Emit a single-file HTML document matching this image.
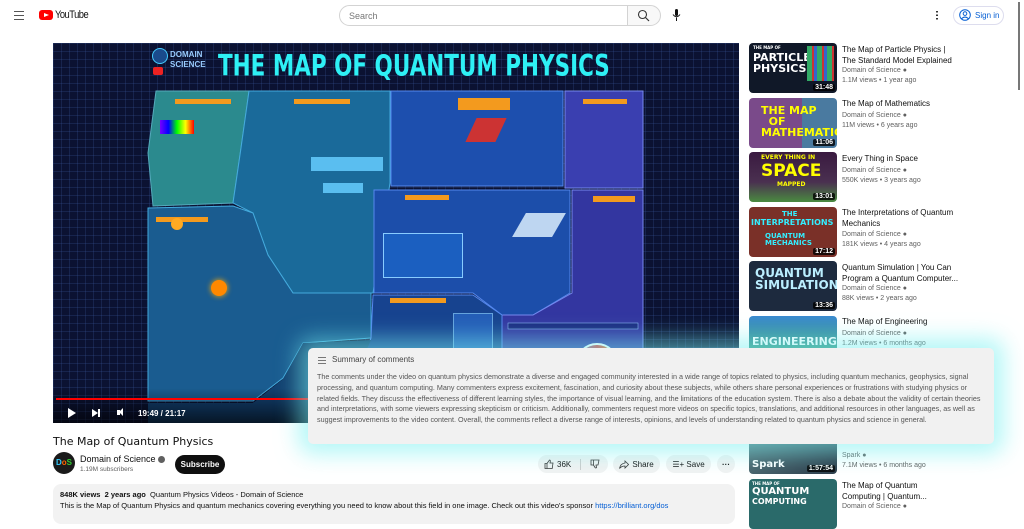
<!DOCTYPE html>
<html><head><meta charset="utf-8"><style>
*{margin:0;padding:0;box-sizing:border-box}
body{width:1024px;height:512px;overflow:hidden;background:#fff;font-family:"Liberation Sans",sans-serif;color:#0f0f0f;position:relative}
.a{position:absolute}
.side .th{position:absolute;left:749px;width:88px;height:50px;border-radius:4px;overflow:hidden}
.side .t{position:absolute;left:842px;font-size:8px;line-height:11px;color:#0f0f0f;width:130px}
.side .m{position:absolute;left:842px;font-size:7px;color:#606060;line-height:10px;white-space:nowrap}
.dur{position:absolute;right:2px;bottom:2px;background:rgba(0,0,0,.8);color:#fff;font-size:7px;font-weight:bold;padding:0 2px;border-radius:2px}
.tt{position:absolute;left:4px;font-weight:bold;font-family:"DejaVu Sans",sans-serif;line-height:1}
.btn{position:absolute;top:455px;height:18px;background:#f2f2f2;border-radius:9px;font-size:8px;display:flex;align-items:center;justify-content:center;gap:3px}
.lbl{position:absolute;background:#f39a1e;height:5px}
</style></head><body>
<!-- header -->
<div class="a" style="left:14px;top:11px;width:10px;height:9px;border-top:1.5px solid #555;border-bottom:1.5px solid #555"><div style="margin-top:2.5px;height:1.5px;background:#555"></div></div>
<div class="a" style="left:39px;top:10px;width:14px;height:10px;background:#f00;border-radius:3px"></div>
<div class="a" style="left:44px;top:12.5px;width:0;height:0;border-left:5px solid #fff;border-top:2.5px solid transparent;border-bottom:2.5px solid transparent"></div>
<div class="a" style="left:55px;top:9px;font-size:11px;letter-spacing:-0.6px;transform:scaleX(.85);transform-origin:left">YouTube</div>
<div class="a" style="left:339px;top:5px;width:289px;height:21px;border:1px solid #d3d3d3;border-radius:11px 0 0 11px;font-size:9px;color:#777;padding:5px 0 0 9px">Search</div>
<div class="a" style="left:627px;top:5px;width:34px;height:21px;border:1px solid #d3d3d3;background:#f8f8f8;border-radius:0 11px 11px 0"></div>
<svg class="a" style="left:637px;top:9px" width="13" height="13" viewBox="0 0 13 13"><circle cx="5.5" cy="5.5" r="4" fill="none" stroke="#333" stroke-width="1.1"/><path d="M8.5 8.5 L12 12" stroke="#333" stroke-width="1.2"/></svg>
<svg class="a" style="left:672px;top:9px" width="9" height="13" viewBox="0 0 9 13"><rect x="3" y="0" width="3" height="7" rx="1.5" fill="#111"/><path d="M1 5.5 Q4.5 10 8 5.5 M4.5 8.5 V12" stroke="#111" fill="none" stroke-width="1"/></svg>
<div class="a" style="left:936px;top:10px;width:2px;height:10px;background:radial-gradient(circle,#333 0.9px,transparent 1px) 0 0/2px 3.5px"></div>
<div class="a" style="left:953px;top:6px;width:51px;height:19px;border:1px solid #dde;border-radius:10px;font-size:8px;color:#065fd4;padding:4px 0 0 21px">Sign in</div>
<svg class="a" style="left:959px;top:9px" width="12" height="12" viewBox="0 0 12 12"><circle cx="6" cy="6" r="5.3" fill="none" stroke="#065fd4"/><circle cx="6" cy="4.6" r="1.8" fill="none" stroke="#065fd4"/><path d="M2.6 9.6 Q6 6.5 9.4 9.6" fill="none" stroke="#065fd4"/></svg>
<div class="a" style="left:1018px;top:2px;width:2px;height:88px;background:#777"></div>

<!-- video -->
<div class="a" style="left:53px;top:43px;width:686px;height:380px;background:#0b1232;overflow:hidden;background-image:linear-gradient(rgba(60,90,160,.25) 1px,transparent 1px),linear-gradient(90deg,rgba(60,90,160,.25) 1px,transparent 1px);background-size:8px 8px">
 <svg class="a" style="left:0;top:0" width="686" height="380" viewBox="0 0 686 380">
  <polygon points="103,48 196,48 188,105 180,160 100,163 95,110" fill="#2b8a8e" stroke="#5ab" stroke-width="1"/>
  <polygon points="196,48 337,48 337,140 320,250 240,250 215,212 200,170 180,160 188,105" fill="#1a6a9a" stroke="#4ad" stroke-width="1"/>
  <polygon points="338,48 510,48 510,143 338,143" fill="#1d4fae" stroke="#58e" stroke-width="1"/>
  <polygon points="512,48 590,48 590,145 512,145" fill="#3a3fb0" stroke="#78e" stroke-width="1"/>
  <polygon points="95,165 180,163 200,170 215,212 240,250 318,250 318,295 250,300 230,335 200,358 95,358" fill="#1a5c90" stroke="#4ad" stroke-width="1"/>
  <polygon points="321,147 517,147 517,250 480,272 449,272 420,250 321,250" fill="#1c4eaa" stroke="#58e" stroke-width="1"/>
  <polygon points="519,147 590,147 590,396 449,396 449,272 480,272 519,250" fill="#3336a0" stroke="#78e" stroke-width="1"/>
  <polygon points="320,252 420,252 449,272 449,374 320,374 300,340 318,295" fill="#17438f" stroke="#58e" stroke-width="1"/>
  <polygon points="95,360 200,360 230,336 250,300 318,297 300,340 320,376 449,376 449,396 95,396" fill="#124070"/>
  <rect x="540" y="153" width="42" height="6" fill="#f39a1e"/>
  <rect x="455" y="280" width="130" height="6" fill="#1a2a80" stroke="#9cf" stroke-width=".5"/>
 </svg>
 <div class="a" style="left:99px;top:5px;width:16px;height:16px;border-radius:50%;background:#1a4b8c;border:1px solid #4cf"></div>
 <div class="a" style="left:100px;top:24px;width:10px;height:8px;background:#e22;border-radius:2px"></div>
 <div class="a" style="left:117px;top:7px;color:#9cf;font-size:8px;font-weight:bold;line-height:10px">DOMAIN<br>SCIENCE</div>
 <div class="a" style="left:165px;top:7px;color:#2ef0f5;font-size:21.5px;font-weight:bold;font-family:'DejaVu Sans',sans-serif;white-space:nowrap;transform:scaleY(1.35);transform-origin:top">THE MAP OF QUANTUM PHYSICS</div>
 <div class="lbl" style="left:122px;top:56px;width:56px"></div>
 <div class="lbl" style="left:241px;top:56px;width:56px"></div>
 <div class="lbl" style="left:405px;top:55px;width:52px;height:12px"></div>
 <div class="lbl" style="left:530px;top:56px;width:44px"></div>
 <div class="lbl" style="left:103px;top:174px;width:52px"></div>
 <div class="lbl" style="left:352px;top:152px;width:44px"></div>
 <div class="lbl" style="left:337px;top:255px;width:56px"></div>
 <div class="lbl" style="left:163px;top:380px;width:56px"></div>
 <div class="a" style="left:107px;top:77px;width:34px;height:14px;background:linear-gradient(90deg,#70f,#00f,#0f0,#ff0,#f00)"></div>
 <div class="a" style="left:258px;top:114px;width:72px;height:14px;background:#6cf;opacity:.85"></div>
 <div class="a" style="left:270px;top:140px;width:40px;height:10px;background:#6cf;opacity:.85"></div>
 <div class="a" style="left:418px;top:75px;width:30px;height:24px;background:#c33;transform:skew(-25deg)"></div>
 <div class="a" style="left:466px;top:170px;width:40px;height:24px;background:#d0e6f8;opacity:.9;transform:skew(-30deg)"></div>
 <div class="a" style="left:330px;top:190px;width:80px;height:45px;border:1px solid #8cf;background:#1b5fc0"></div>
 <div class="a" style="left:400px;top:270px;width:40px;height:40px;border:1px solid #8cf;background:#2a68c8;opacity:.7"></div>
 <div class="a" style="left:522px;top:300px;width:44px;height:44px;border-radius:50%;background:conic-gradient(#d33,#fb0,#3c3,#39f,#d33);border:2px solid #fff"></div>
 <div class="a" style="left:158px;top:237px;width:16px;height:16px;border-radius:50%;background:#f80;box-shadow:0 0 6px #fa0"></div>
 <div class="a" style="left:418px;top:305px;width:20px;height:20px;border-radius:50%;background:#f90"></div>
 <div class="a" style="left:118px;top:175px;width:12px;height:12px;border-radius:50%;background:#fa2"></div>
 <div class="a" style="left:0;top:345px;width:686px;height:35px;background:linear-gradient(transparent,rgba(0,0,0,.65))"></div>
 <div class="a" style="left:3px;top:355px;width:254px;height:2px;background:#f00"></div>
 <div class="a" style="left:15px;top:365px;width:0;height:0;border-left:8px solid #fff;border-top:5px solid transparent;border-bottom:5px solid transparent"></div>
 <div class="a" style="left:39px;top:366px;width:0;height:0;border-left:6px solid #fff;border-top:4px solid transparent;border-bottom:4px solid transparent"></div>
 <div class="a" style="left:45px;top:366px;width:2px;height:8px;background:#fff"></div>
 <div class="a" style="left:64px;top:367px;width:3px;height:5px;background:#fff"></div>
 <div class="a" style="left:66px;top:365px;width:0;height:0;border-right:4px solid #fff;border-top:4px solid transparent;border-bottom:4px solid transparent"></div>
 <div class="a" style="left:85px;top:366px;color:#fff;font-size:8px;font-weight:bold">19:49 / 21:17</div>
</div>

<!-- info -->
<div class="a" style="left:53px;top:435px;font-size:11px;font-family:'DejaVu Sans',sans-serif">The Map of Quantum Physics</div>
<div class="a" style="left:53px;top:452px;width:22px;height:22px;border-radius:50%;background:#1a1a1a"><div style="color:#3cf;font-size:8px;font-weight:bold;padding:6px 0 0 3px">D<span style="color:#f60">o</span><span style="color:#3c3">S</span></div></div>
<div class="a" style="left:80px;top:454px;font-size:9px">Domain of Science <span style="display:inline-block;width:7px;height:7px;border-radius:50%;background:#606060;vertical-align:-1px"></span></div>
<div class="a" style="left:80px;top:466px;font-size:6.5px;color:#606060">1.19M subscribers</div>
<div class="a" style="left:175px;top:455px;width:50px;height:19px;border-radius:10px;background:#0f0f0f;color:#fff;font-size:8px;font-weight:bold;text-align:center;line-height:19px">Subscribe</div>
<div class="btn" style="left:538px;width:70px;justify-content:flex-start;padding-left:6px"><svg width="10" height="10" viewBox="0 0 10 10"><path d="M1 4.5h2v5H1z M3 4.5 L5.5 1 Q6.5 1 6.3 2.5 L6 4 H9 L8.2 9.5 H3" fill="none" stroke="#333" stroke-width=".8"/></svg>36K<span style="width:1px;height:11px;background:#ccc;margin:0 6px"></span><svg width="10" height="10" viewBox="0 0 10 10"><path d="M1 1h8 L8 6 H6 L6.5 8.5 Q5.8 9.5 5 8.5 L3.5 6 H1z M3.5 1v5" fill="none" stroke="#333" stroke-width=".8"/></svg></div>
<div class="btn" style="left:613px;width:47px"><svg width="10" height="9" viewBox="0 0 10 9"><path d="M6 1 L9.5 4.5 L6 8 V6 Q2.5 6 .5 8.5 Q1.5 3.5 6 3z" fill="none" stroke="#333" stroke-width=".8"/></svg>Share</div>
<div class="btn" style="left:666px;width:45px">☰+ Save</div>
<div class="btn" style="left:717px;width:18px;font-weight:bold">···</div>
<div class="a" style="left:53px;top:484px;width:682px;height:40px;background:#f2f2f2;border-radius:8px;padding:5px 7px;font-size:7.5px;line-height:11px"><b>848K views&nbsp; 2 years ago</b>&nbsp; Quantum Physics Videos - Domain of Science<br>This is the Map of Quantum Physics and quantum mechanics covering everything you need to know about this field in one image. Check out this video's sponsor <span style="color:#065fd4">https://brilliant.org/dos</span></div>

<!-- sidebar -->
<div class="side">
 <div class="th" style="top:43px;background:#101828"><div class="tt" style="top:3px;color:#fff;font-size:4px">THE MAP OF</div><div class="tt" style="top:9px;color:#fff;font-size:11px">PARTICLE<br>PHYSICS</div><div class="a" style="left:58px;top:3px;width:27px;height:35px;background:repeating-linear-gradient(90deg,#3a6 0 5px,#c33 5px 7px,#36c 7px 10px)"></div><div class="dur">31:48</div></div>
 <div class="t" style="top:44px">The Map of Particle Physics |<br>The Standard Model Explained</div><div class="m" style="top:66px">Domain of Science ●</div><div class="m" style="top:76px">1.1M views • 1 year ago</div>

 <div class="th" style="top:98px;background:linear-gradient(90deg,#7a4a8a 60%,#4a7aa0 60%)"><div class="tt" style="top:7px;left:12px;color:#ff0;font-size:11px;line-height:11px">THE MAP<br>&nbsp;&nbsp;OF<br>MATHEMATICS</div><div class="dur">11:06</div></div>
 <div class="t" style="top:98px">The Map of Mathematics</div><div class="m" style="top:111px">Domain of Science ●</div><div class="m" style="top:121px">11M views • 6 years ago</div>

 <div class="th" style="top:152px;background:linear-gradient(#3a1a40,#4a3050 60%,#4a8a40)"><div class="tt" style="top:3px;left:12px;color:#ff0;font-size:6px">EVERY THING IN</div><div class="tt" style="top:11px;left:12px;color:#ff0;font-size:17px">SPACE</div><div class="tt" style="top:30px;left:28px;color:#ff0;font-size:6px">MAPPED</div><div class="dur">13:01</div></div>
 <div class="t" style="top:153px">Every Thing in Space</div><div class="m" style="top:166px">Domain of Science ●</div><div class="m" style="top:176px">550K views • 3 years ago</div>

 <div class="th" style="top:207px;background:#7a3028"><div class="tt" style="top:4px;left:33px;color:#3ef;font-size:7px">THE</div><div class="tt" style="top:12px;left:2px;color:#3ef;font-size:8px">INTERPRETATIONS</div><div class="tt" style="top:26px;left:16px;color:#3ef;font-size:7px">QUANTUM<br>MECHANICS</div><div class="dur">17:12</div></div>
 <div class="t" style="top:207px">The Interpretations of Quantum<br>Mechanics</div><div class="m" style="top:230px">Domain of Science ●</div><div class="m" style="top:240px">181K views • 4 years ago</div>

 <div class="th" style="top:261px;background:#1d2a3e"><div class="tt" style="top:6px;left:6px;color:#bef;font-size:12px">QUANTUM<br>SIMULATION</div><div class="dur">13:36</div></div>
 <div class="t" style="top:262px;white-space:nowrap">Quantum Simulation | You Can<br>Program a Quantum Computer...</div><div class="m" style="top:284px">Domain of Science ●</div><div class="m" style="top:294px">88K views • 2 years ago</div>

 <div class="th" style="top:316px;background:linear-gradient(#3a8ad0,#3a9a50)"><div class="tt" style="top:20px;left:3px;color:#fff;font-size:11px">ENGINEERING</div></div>
 <div class="t" style="top:316px">The Map of Engineering</div><div class="m" style="top:329px">Domain of Science ●</div><div class="m" style="top:339px">1.2M views • 6 months ago</div>

 <div class="th" style="top:424px;background:linear-gradient(135deg,#5a7a80,#2a3a48)"><div class="tt" style="top:36px;left:3px;color:#fff;font-size:10px">Spark</div><div class="dur">1:57:54</div></div>
 <div class="m" style="top:451px">Spark ●</div><div class="m" style="top:461px">7.1M views • 6 months ago</div>

 <div class="th" style="top:479px;background:#2a6a6a"><div class="tt" style="top:3px;left:3px;color:#fff;font-size:4px">THE MAP OF</div><div class="tt" style="top:8px;left:3px;color:#fff;font-size:10px">QUANTUM</div><div class="tt" style="top:19px;left:3px;color:#fff;font-size:8px">COMPUTING</div></div>
 <div class="t" style="top:480px">The Map of Quantum<br>Computing | Quantum...</div><div class="m" style="top:502px">Domain of Science ●</div>
</div>

<!-- summary popup -->
<div class="a" style="left:308px;top:348px;width:686px;height:96px;background:#f1f1f1;border-radius:5px;box-shadow:0 0 22px 10px rgba(120,240,240,.55);padding:0 10px">
 <div class="a" style="left:10px;top:9px;width:8px;height:7px;border-top:1px solid #777;border-bottom:1px solid #777"><div style="margin-top:2px;height:1px;background:#777"></div></div>
 <div class="a" style="left:24px;top:7px;font-size:8px;color:#444">Summary of comments</div>
 <div class="a" style="left:9px;top:24px;width:670px;font-size:7.2px;line-height:10.8px;color:#555">The comments under the video on quantum physics demonstrate a diverse and engaged community interested in a wide range of topics related to physics, including quantum mechanics, geophysics, signal processing, and quantum computing. Many commenters express excitement, fascination, and curiosity about these subjects, while others share personal experiences or frustrations with studying physics or related fields. They discuss the effectiveness of different learning styles, the importance of visual learning, and the limitations of the education system. There is also a debate about the validity of certain theories and interpretations, with some viewers expressing skepticism or criticism. Additionally, commenters request more videos on specific topics, translations, and additional resources in other languages, as well as suggest improvements to the video content. Overall, the comments reflect a diverse range of interests, opinions, and levels of understanding related to quantum physics and science in general.</div>
</div>
</body></html>
